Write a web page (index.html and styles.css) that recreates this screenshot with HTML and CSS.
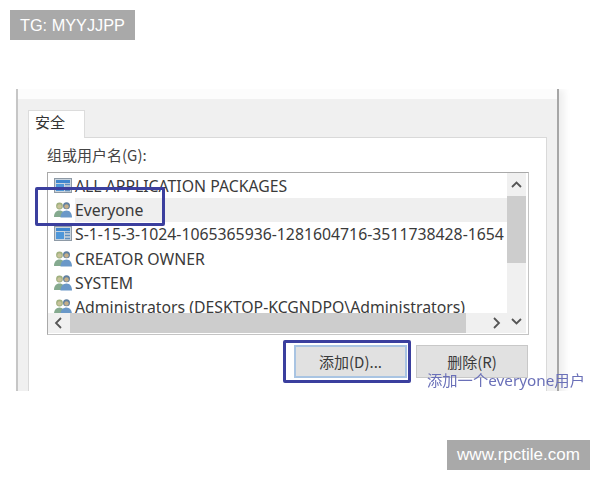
FILE: index.html
```html
<!DOCTYPE html>
<html lang="zh-CN">
<head>
<meta charset="utf-8">
<title>安全</title>
<link rel="stylesheet" href="styles.css">
</head>
<body>
<svg class="defs" width="0" height="0" aria-hidden="true">
  <symbol id="users" viewBox="0 0 18 16">
    <circle cx="5.5" cy="4" r="3.4" fill="#9fb07e"/>
    <circle cx="5.5" cy="4.400" r="2.200" fill="#c7c29a"/>
    <path d="M0 15c0-4 2-6.500 5.500-6.500S11 11 11 15z" fill="#85aa8f"/>
    <circle cx="12.500" cy="3.800" r="3.500" fill="#5f7f9f"/>
    <circle cx="12.500" cy="4.500" r="2.200" fill="#c4ae88"/>
    <path d="M6.500 15.500c0-4.200 2.500-7 6-7s5.500 2.800 5.500 7z" fill="#6a98c8"/>
  </symbol>
  <symbol id="grid" viewBox="0 0 18 16">
    <rect x="0.500" y="0.500" width="17" height="14" fill="#c9d4de" stroke="#8e9aa6"/>
    <rect x="2" y="2" width="14" height="3" fill="#3f87cf"/>
    <rect x="2" y="6" width="8" height="7" fill="#4f97d9"/>
    <path d="M11 6.500h5M11 9.500h5M11 12.500h5" stroke="#5f8fbf" stroke-width="1.500"/>
  </symbol>
</svg>

<div class="tag tag-top">TG: MYYJJPP</div>

<div class="shot">
  <div class="window">
    <div class="dialog">
      <div class="tab">安全</div>
      <div class="panel">
        <div class="label">组或用户名(G):</div>
        <div class="list">
          <ul class="rows">
            <li class="row"><svg class="icon"><use href="#grid"/></svg><span class="name">ALL APPLICATION PACKAGES</span></li>
            <li class="row"><svg class="icon"><use href="#users"/></svg><span class="name selected">Everyone</span></li>
            <li class="row"><svg class="icon"><use href="#grid"/></svg><span class="name">S-1-15-3-1024-1065365936-1281604716-3511738428-1654</span></li>
            <li class="row"><svg class="icon"><use href="#users"/></svg><span class="name">CREATOR OWNER</span></li>
            <li class="row"><svg class="icon"><use href="#users"/></svg><span class="name">SYSTEM</span></li>
            <li class="row"><svg class="icon"><use href="#users"/></svg><span class="name">Administrators (DESKTOP-KCGNDPO\Administrators)</span></li>
          </ul>
          <div class="vbar">
            <svg class="arrow" viewBox="0 0 19 23"><path d="M5 14l4.500-4.500L14 14" /></svg>
            <div class="vthumb"></div>
            <div class="vrest"></div>
            <svg class="arrow" viewBox="0 0 19 23"><path d="M5 9l4.500 4.500L14 9" /></svg>
          </div>
          <div class="hbar">
            <svg class="arrow harrow" viewBox="0 0 22 20"><path d="M13 5l-5 5 5 5" /></svg>
            <div class="hthumb"></div>
            <div class="hrest"></div>
            <svg class="arrow harrow" viewBox="0 0 22 20"><path d="M9 5l5 5-5 5" /></svg>
          </div>
        </div>
        <div class="actions">
          <button class="btn btn-add">添加(D)...</button>
          <button class="btn btn-del">删除(R)</button>
        </div>
      </div>
    </div>
  </div>
  <div class="frame frame-everyone"></div>
  <div class="frame frame-add"></div>
  <div class="note">添加一个everyone用户</div>
</div>

<div class="tag tag-bottom">www.rpctile.com</div>
</body>
</html>
```
FILE: styles.css
```css
* { box-sizing: border-box; }
html, body { margin: 0; padding: 0; }
body {
  width: 600px;
  height: 480px;
  overflow: hidden;
  background: #fff;
  font-family: "Noto Sans", "Noto Sans CJK SC", sans-serif;
  color: #333;
}
.defs { position: absolute; }

.tag {
  height: 30px;
  background: #a9a9a9;
  color: #fff;
  font: 16.300px/30px "Liberation Sans", Arial, sans-serif;
  text-align: center;
}
.tag-top { width: 125px; margin: 10px 0 0 10px; }
.tag-bottom { width: 143px; margin: 49px 0 0 447px; font-size: 17px; }

.shot {
  position: relative;
  height: 302px;
  margin-top: 49px;
  overflow: hidden;
  filter: blur(0.6px);
}
.window {
  width: 543px;
  height: 330px;
  margin-left: 16px;
  padding-top: 10px;
  background: #fcfcfc;
  border-left: 2px solid #c6c6c6;
  border-right: 2px solid #a6a6a6;
  box-shadow: 5px 0 7px rgba(0, 0, 0, 0.07);
}
.dialog {
  height: 320px;
  padding: 11px 10px 0;
  background: #f0f0f0;
}
.tab {
  width: 57px;
  height: 28px;
  position: relative;
  z-index: 1;
  margin-bottom: -1px;
  padding-left: 6px;
  background: #fff;
  border: 1px solid #dcdcdc;
  border-bottom: 0;
  font: 15px/22px "Noto Sans CJK SC", sans-serif;
}
.panel {
  height: 300px;
  padding: 0 18px;
  background: #fff;
  border: 1px solid #d9d9d9;
}
.label {
  height: 34px;
  font: 15px/34px "Noto Sans CJK SC", sans-serif;
  color: #444;
}
.list {
  display: grid;
  grid-template-columns: 459px 19px;
  grid-template-rows: 140px 20px;
  width: 482px;
  height: 163px;
  background: #fff;
  border: 1px solid #a9a9a9;
  border-bottom-color: #c4c4c4;
  border-right-color: #c4c4c4;
}
.rows {
  list-style: none;
  margin: 0;
  padding: 1px 0 0;
  overflow: hidden;
}
.row {
  display: flex;
  align-items: center;
  height: 24.2px;
  padding-left: 6px;
  white-space: nowrap;
}
.icon { flex: none; width: 18px; height: 16px; margin-right: 3px; }
.name {
  flex: 1;
  font-size: 15.800px;
  line-height: 24px;
  color: #3a3a3a;
}
.selected { background: #efefef; }

.vbar {
  grid-column: 2;
  grid-row: 1 / 3;
  display: flex;
  flex-direction: column;
  height: 160px;
  background: #f0f0f0;
}
.arrow {
  flex: none;
  display: block;
  width: 19px;
  height: 23px;
  fill: none;
  stroke: #555;
  stroke-width: 1.800;
}
.vthumb { flex: none; height: 67px; background: #cdcdcd; }
.vrest { flex: 1; }
.hbar {
  grid-column: 1;
  grid-row: 2;
  display: flex;
  height: 20px;
  background: #f0f0f0;
}
.harrow { width: 22px; height: 20px; }
.hthumb { flex: none; width: 396px; background: #cdcdcd; }
.hrest { flex: 1; }

.actions {
  display: flex;
  justify-content: flex-end;
  gap: 9px;
  margin-top: 10px;
}
.btn {
  height: 33px;
  padding: 0;
  background: #e1e1e1;
  border: 1px solid #c8c8c8;
  color: #3a3a3a;
  font: 15px "Noto Sans CJK SC", sans-serif;
}
.btn-add { width: 113px; border: 2px solid #a9c4e2; }
.btn-del { width: 112px; }

.frame {
  position: absolute;
  border: 3.500px solid #3b3f9e;
  border-radius: 2px;
}
.frame-everyone { left: 35px; top: 98px; width: 130px; height: 39px; }
.frame-add { left: 283px; top: 251px; width: 128px; height: 43px; }
.note {
  position: absolute;
  left: 427px;
  top: 280px;
  color: #6a70b8;
  font: 15.300px/22px "Noto Sans", "Noto Sans CJK SC", sans-serif;
  white-space: nowrap;
}
```
